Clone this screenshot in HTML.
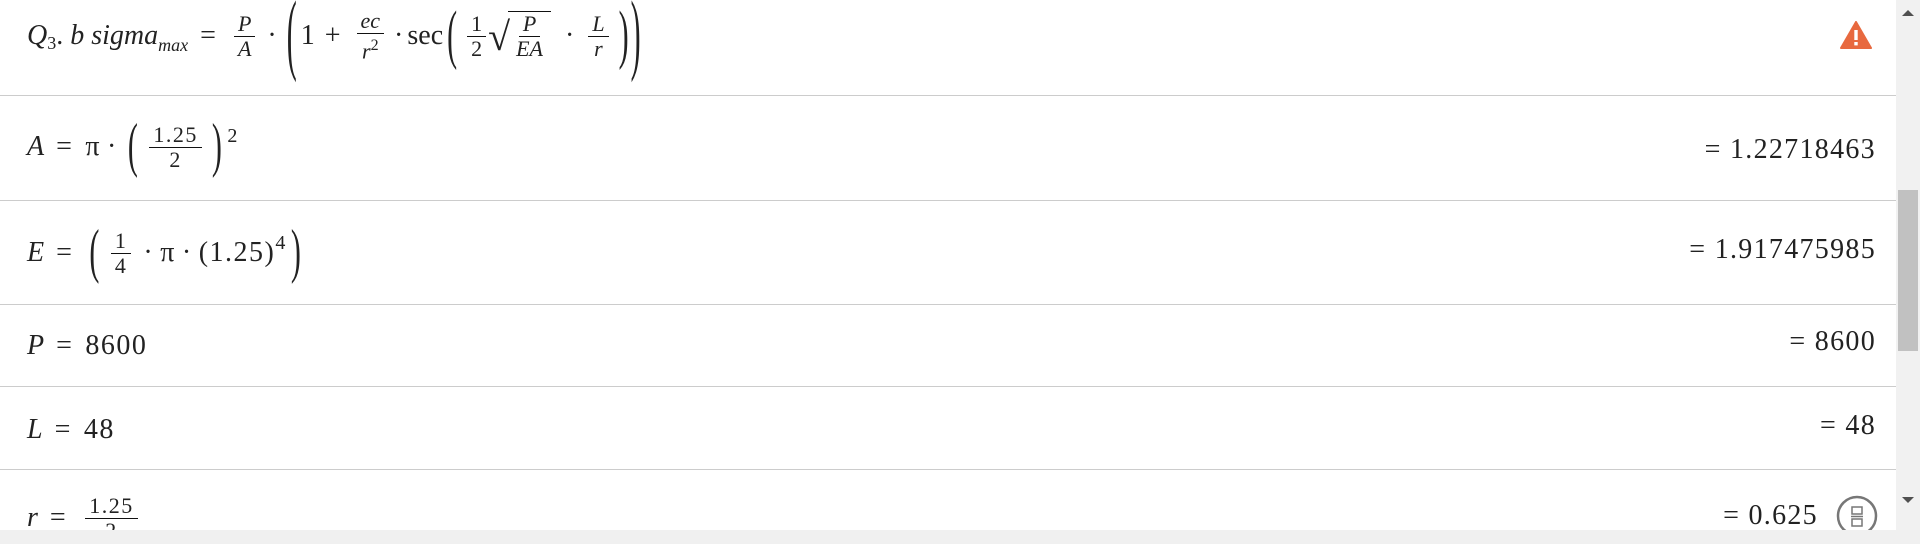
<!DOCTYPE html>
<html><head><meta charset="utf-8"><style>
*{margin:0;padding:0;box-sizing:border-box}
body{width:1920px;height:544px;overflow:hidden;background:#fff;font-family:"Liberation Serif",serif;color:#222;position:relative}
.row{position:absolute;left:0;width:1896px;border-bottom:1px solid #ccc}
.m{position:absolute;left:27px;font-size:28px;white-space:nowrap;display:flex;align-items:center;letter-spacing:1.5px}
.i{font-style:italic;letter-spacing:0}
.fr{display:inline-flex;flex-direction:column;align-items:center;font-size:22px;line-height:24px;margin:0 6px;vertical-align:middle}
.fr span:first-child{border-bottom:1px solid #111;padding:0 4px}
.res{position:absolute;right:44px;font-size:28px;white-space:nowrap;letter-spacing:1.3px}
.bp{display:inline-block;font-size:30px;transform:scaleY(2.2);margin:0 4px;font-weight:300}
.sp{margin:0 12px}
</style></head><body>
<div class="row" style="top:0;height:96px"></div>
<div class="row" style="top:96px;height:105px"></div>
<div class="row" style="top:201px;height:104px"></div>
<div class="row" style="top:305px;height:82px"></div>
<div class="row" style="top:387px;height:83px"></div>

<div class="m" style="top:12px;height:48px;letter-spacing:0">
<span class="i">Q</span><span style="font-size:18px;margin-top:14px">3</span>.<span class="i">&nbsp;b sigma</span><span class="i" style="font-size:18px;margin-top:18px">max</span><span class="sp">=</span>
<span class="fr i"><span>P</span><span>A</span></span><span style="margin:0 6px">·</span>
<span class="bp" style="transform:scaleY(3)">(</span>1<span style="margin:0 10px">+</span>
<span class="fr i"><span>ec</span><span>r<sup style="font-style:normal;font-size:16px">2</sup></span></span><span style="margin:0 4px">·</span>sec<span class="bp">(</span>
<span class="fr"><span>1</span><span>2</span></span><span style="font-size:40px;margin-left:-4px">√</span><span class="fr i" style="border-top:1px solid #111;margin-left:-2px;padding:0 8px"><span>P</span><span>EA</span></span><span style="margin:0 8px">·</span><span class="fr i"><span>L</span><span>r</span></span><span class="bp">)</span><span class="bp" style="transform:scaleY(3);margin-left:-2px">)</span>
</div>
<svg style="position:absolute;left:1840px;top:21px" width="32" height="28" viewBox="0 0 32 28"><path d="M16 1 L31 27 L1 27 Z" fill="#e8693f" stroke="#e8693f" stroke-linejoin="round" stroke-width="2"/><rect x="14.3" y="9" width="3.4" height="10" fill="#fff"/><rect x="14.3" y="21" width="3.4" height="3.4" fill="#fff"/></svg>

<div class="m" style="top:122px;height:50px"><span class="i">A</span><span class="sp">=</span>π<span style="margin:0 6px">·</span><span class="bp" style="transform:scaleY(2)">(</span><span class="fr"><span>1.25</span><span>2</span></span><span class="bp" style="transform:scaleY(2)">)</span><span style="font-size:20px;margin-top:-22px">2</span></div>
<div class="res" style="top:134px">= 1.22718463</div>

<div class="m" style="top:228px;height:50px"><span class="i">E</span><span class="sp">=</span><span class="bp" style="transform:scaleY(2)">(</span><span class="fr"><span>1</span><span>4</span></span><span style="margin:0 6px">·</span>π<span style="margin:0 6px">·</span>(1.25)<span style="font-size:20px;margin-top:-20px">4</span><span class="bp" style="transform:scaleY(2)">)</span></div>
<div class="res" style="top:234px">= 1.917475985</div>

<div class="m" style="top:326px;height:40px"><span class="i">P</span><span class="sp">=</span>8600</div>
<div class="res" style="top:326px">= 8600</div>

<div class="m" style="top:410px;height:40px"><span class="i">L</span><span class="sp">=</span>48</div>
<div class="res" style="top:410px">= 48</div>

<div class="m" style="top:488px;height:60px"><span class="i">r</span><span class="sp">=</span><span class="fr"><span>1.25</span><span>2</span></span></div>
<div class="res" style="top:500px;right:102px">= 0.625</div>
<svg style="position:absolute;left:1836px;top:495px" width="42" height="42"><circle cx="21" cy="21" r="19" fill="#fff" stroke="#777" stroke-width="2.5"/><rect x="16" y="12" width="10" height="7" fill="none" stroke="#777" stroke-width="1.5"/><line x1="15" y1="21.5" x2="27" y2="21.5" stroke="#777" stroke-width="1.5"/><rect x="16" y="24" width="10" height="7" fill="none" stroke="#777" stroke-width="1.5"/></svg>

<div style="position:absolute;left:0;top:530px;width:1920px;height:14px;background:#f0f0f0"></div>
<div style="position:absolute;left:1896px;top:0;width:24px;height:530px;background:#f1f1f1"></div>
<div style="position:absolute;left:1898px;top:190px;width:20px;height:161px;background:#c1c1c1"></div>
<svg style="position:absolute;left:1900px;top:6px" width="16" height="12"><path d="M2 10 L8 4 L14 10 Z" fill="#505050"/></svg>
<svg style="position:absolute;left:1900px;top:494px" width="16" height="12"><path d="M2 3 L8 9 L14 3 Z" fill="#505050"/></svg>
</body></html>
